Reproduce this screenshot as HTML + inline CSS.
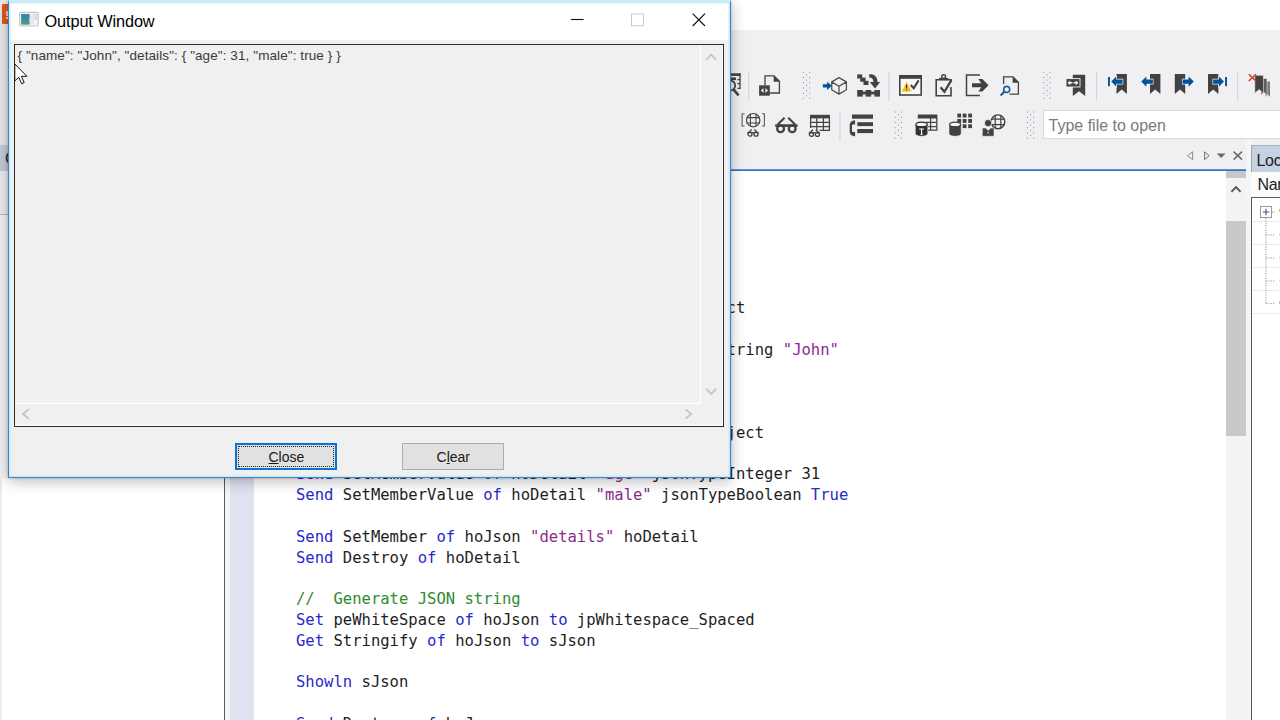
<!DOCTYPE html>
<html><head><meta charset="utf-8"><title>Output Window</title>
<style>
*{box-sizing:border-box;margin:0;padding:0}
html,body{width:1280px;height:720px;overflow:hidden;background:#fff;font-family:"Liberation Sans",sans-serif}
.abs{position:absolute}
#root{position:relative;width:1280px;height:720px;overflow:hidden;background:#fff}
#ide-title{left:0;top:0;width:1280px;height:30px;background:#fff}
#ide-toolbar{left:0;top:30px;width:1280px;height:141px;background:#f0f0f3}
#blue-line{left:0;top:168.8px;width:1245.8px;height:2.3px;background:linear-gradient(#7fb8ea,#3a7cc4 45%,#2f6fba)}
#left-strip{left:0;top:0;width:9px;height:720px}
#left-pane{left:0;top:172px;width:224px;height:548px;background:#fff}
#left-split{left:224px;top:172px;width:6px;height:548px;background:#f5f5f7;border-left:1px solid #5c5c5c}
#gutter{left:230px;top:172px;width:24px;height:548px;background:#e0e2f1}
#editor{left:254px;top:172px;width:972px;height:548px;background:#fff}
#code{left:296px;top:298px;white-space:pre;font-family:"DejaVu Sans Mono","Liberation Mono",monospace;font-size:15.56px;line-height:20.8px;color:#1e1e1e}
.k{color:#2828cc}.s{color:#8b2b8b}.c{color:#2e8b2e}
/* editor scrollbar */
#vs-split{left:1226px;top:171px;width:20px;height:7px;background:#c9c9cb}
#vs-track{left:1226px;top:178px;width:20px;height:542px;background:#f3f3f4}
#vs-thumb{left:1226px;top:221px;width:20px;height:215px;background:#c9c9cb}
/* right panel */
#rp-gap{left:1246px;top:140px;width:5px;height:580px;background:#f5f5f7}
#rp-tab{left:1251px;top:145px;width:29px;height:27px;background:#c6d1e1;border-top:1px solid #a4afc0;border-left:1px solid #9aa6b8;font-size:16px;color:#1e1e1e;line-height:29px;padding-left:4.5px;letter-spacing:-0.3px;overflow:hidden;white-space:nowrap}
#rp-head{left:1251px;top:172px;width:29px;height:25px;background:#fbfbfb;font-size:16px;color:#1e1e1e;line-height:26px;padding-left:6.5px;letter-spacing:-0.3px;overflow:hidden;white-space:nowrap}
#rp-tree{left:1251px;top:197px;width:40px;height:540px;background:#fff;border:1px solid #5a5a5a}
.rrow{left:1252px;width:28px;height:1px;background:#ececec}
/* file input */
#finput{left:1043px;top:110.4px;width:250px;height:28.4px;background:#fff;border:1px solid #dadade;font-size:16px;color:#7a7a7a;line-height:30.4px;padding-left:4.5px;white-space:nowrap}
/* window */
#win{left:8px;top:0;width:723.2px;height:477.7px;background:#f0f0f0;border:1.5px solid #3f83c6;border-top:2px solid #c9ecf7;box-shadow:0 3px 14px rgba(0,0,0,.27),0 0 3px rgba(0,0,0,.2)}
#titlebar{left:0;top:0;width:720.2px;height:37.7px;background:#fff}
#title{left:35.5px;top:9.6px;font-size:16.3px;color:#000;white-space:nowrap;letter-spacing:-0.1px}
#txt{left:4.5px;top:41.6px;width:710.4px;height:383.3px;border:1.5px solid #2b2b2b;background:#f0f0f0;box-shadow:inset -1px -1px 0 #fff}
#json{left:3px;top:3px;font-size:13.5px;letter-spacing:0.09px;color:#3a3a3a;white-space:pre}
.btn{height:27.5px;width:102px;background:#e1e1e1;border:1px solid #adadad;font-size:14px;text-align:center;line-height:26px;color:#1a1a1a}
</style></head><body><div id="root">
<div id="ide-title" class="abs"></div>
<div id="ide-toolbar" class="abs"></div>
<div id="left-pane" class="abs"></div>
<div id="left-split" class="abs"></div>
<div id="gutter" class="abs"></div>
<div id="editor" class="abs"></div>
<div id="blue-line" class="abs"></div>
<div id="vs-track" class="abs"></div>
<div id="vs-split" class="abs"></div>
<div id="vs-thumb" class="abs"></div>
<div id="rp-gap" class="abs"></div>
<div id="rp-tab" class="abs">Locals</div>
<div id="rp-head" class="abs">Name</div>
<div id="rp-tree" class="abs"></div>
<div class="rrow abs" style="top:221px"></div>
<div class="rrow abs" style="top:244px"></div>
<div class="rrow abs" style="top:267px"></div>
<div class="rrow abs" style="top:290px"></div>
<div class="rrow abs" style="top:313px"></div>
<div id="finput" class="abs">Type file to open</div>
<!-- left strip pieces -->
<div class="abs" style="left:0;top:0;width:9px;height:145px;background:#e9e9ec"></div>
<div class="abs" style="left:2px;top:4px;width:7px;height:20px;background:#e2571c;border-radius:1px"></div>
<div class="abs" style="left:6.2px;top:10.5px;width:2.2px;height:5.5px;background:#f7d5c6"></div><div class="abs" style="left:6.2px;top:17px;width:2.2px;height:1.6px;background:#f7d5c6"></div>
<div class="abs" style="left:0;top:145px;width:9px;height:26px;background:#c3ccd9;overflow:hidden;font-size:16.5px;line-height:26px;color:#1e1e1e;padding-left:5px">Co</div>
<div class="abs" style="left:0;top:171px;width:9px;height:43px;background:#ededf1"></div>
<div class="abs" style="left:0;top:214px;width:9px;height:1px;background:#b8b8bc"></div>
<div class="abs" style="left:0;top:215px;width:9px;height:263px;background:#f3f3f5"></div>
<div class="abs" style="left:0;top:478px;width:2px;height:242px;background:#ececee"></div>
<svg class="abs" style="left:0;top:0" width="1280" height="720" viewBox="0 0 1280 720" fill="none">
<defs>
 <g id="grip" fill="#9a9aa2">
  <rect x="0" y="0" width="1.1" height="1.1"/><rect x="6.3" y="0" width="1.1" height="1.1"/>
  <rect x="3.2" y="2.6" width="1.1" height="1.1"/>
  <rect x="0" y="5.2" width="1.1" height="1.1"/><rect x="6.3" y="5.2" width="1.1" height="1.1"/>
  <rect x="3.2" y="7.8" width="1.1" height="1.1"/>
  <rect x="0" y="10.4" width="1.1" height="1.1"/><rect x="6.3" y="10.4" width="1.1" height="1.1"/>
  <rect x="3.2" y="13" width="1.1" height="1.1"/>
  <rect x="0" y="15.6" width="1.1" height="1.1"/><rect x="6.3" y="15.6" width="1.1" height="1.1"/>
  <rect x="3.2" y="18.2" width="1.1" height="1.1"/>
  <rect x="0" y="20.8" width="1.1" height="1.1"/><rect x="6.3" y="20.8" width="1.1" height="1.1"/>
  <rect x="3.2" y="23.4" width="1.1" height="1.1"/>
  <rect x="0" y="26" width="1.1" height="1.1"/><rect x="6.3" y="26" width="1.1" height="1.1"/>
 </g>
 <path id="bm" d="M0 0H10.4V20.2L5.2 15.6L0 20.2Z" fill="#424242"/>
 <g id="sglass" stroke="#424242" stroke-width="1.3" fill="none">
  <circle cx="3" cy="5" r="2"/><circle cx="9" cy="5" r="2"/><path d="M0.3 3.4H11.7M1.5 3.4L4.6 0.3M10.5 3.4L7.4 0.3"/>
 </g>
</defs>
<!-- separators -->
<g stroke="#d4d4da" stroke-width="1.2">
 <path d="M748.7 72V101M888.8 72V101M1096.5 72V101M1237.6 72V101M839.9 112V141"/>
</g>
<!-- grips -->
<use href="#grip" x="802.8" y="71.8"/>
<use href="#grip" x="1043.3" y="71.8"/>
<use href="#grip" x="894.6" y="111.5"/>
<use href="#grip" x="1026.8" y="111.5"/>
<!-- A: partial table/magnifier icon (mostly hidden by window) -->
<g>
 <rect x="722" y="73.3" width="18.6" height="2.6" fill="#424242"/>
 <rect x="722" y="77.5" width="14" height="2.6" fill="#424242"/>
 <path d="M740 73.5V88.3H737.5M737.4 79.7H740M737.4 83.7H740" stroke="#424242" stroke-width="1.3"/>
 <circle cx="730" cy="85.5" r="5.2" stroke="#424242" stroke-width="1.7"/>
 <path d="M733.6 89.6L738.6 95.3" stroke="#424242" stroke-width="2.6"/>
</g>
<!-- C: doc with code square -->
<g>
 <path d="M765 85.3V75.9H774L779.4 81.3V93H770" stroke="#424242" stroke-width="1.3"/>
 <path d="M773.6 75.6L779.8 81.8H773.6Z" fill="#424242"/>
 <rect x="759.1" y="85.3" width="10.7" height="10.4" fill="#424242"/>
 <path d="M760.9 90.5L763.5 88.1V92.9ZM768 90.5L765.4 88.1V92.9Z" fill="#f4f4f4"/>
</g>
<!-- E: arrow + cube -->
<g>
 <path d="M822.8 84.3H827.2V81.4L831.6 85.8L827.2 90.3V87.4H822.8Z" fill="#00539c"/>
 <path d="M839 77.6L846.4 81.9V89.8L839 94.1L831.7 89.8V81.9ZM831.7 81.9L839 86.3L846.4 81.9M839 86.3V94.1" stroke="#4c4c4c" stroke-width="1.25" stroke-linejoin="round"/>
</g>
<!-- F: stairs / step icon -->
<g fill="#424242">
 <rect x="857.2" y="74.4" width="5" height="4.1"/><rect x="860.2" y="77.6" width="5.4" height="4.1"/><rect x="863.5" y="80.8" width="5" height="4.2"/>
 <rect x="857.2" y="90" width="5.6" height="6.6"/><rect x="865.6" y="90" width="5.6" height="6.6"/><rect x="874.4" y="90" width="5.6" height="6.6"/><rect x="860" y="91.6" width="17" height="2.8"/>
 <path d="M869.2 74.4C874 74 877.6 76.6 877.4 82H880.2L875 88.4L869.8 82H873.4C873.6 79.2 872 77.6 869.2 77.6Z"/>
</g>
<!-- H: window w/ warning + check -->
<g>
 <rect x="899.8" y="75.8" width="21.4" height="19.2" fill="#f7f7f7" stroke="#424242" stroke-width="1.6"/>
 <rect x="899" y="75" width="23" height="3.8" fill="#424242"/>
 <path d="M906.6 81.8L911.6 91.4H901.6Z" fill="#f7c31a"/>
 <path d="M906.6 84.6V88.4M906.6 89.4V90.6" stroke="#2a2a2a" stroke-width="1.1"/>
 <path d="M910.8 85L913.7 88.2L918.6 80.4" stroke="#424242" stroke-width="2.1"/>
</g>
<!-- I: clipboard check -->
<g stroke="#424242">
 <path d="M951 87V95.8H936.2V79.8H951V82" stroke-width="1.6"/>
 <circle cx="943.6" cy="76.6" r="1.9" stroke-width="1.4"/>
 <path d="M939 79H948.2" stroke-width="2.2"/>
 <path d="M940.6 87.2L944.4 91.8L951.4 80.2" stroke-width="2.3"/>
</g>
<!-- J: export -->
<g>
 <path d="M980 75.1H966.5V95.6H980" stroke="#424242" stroke-width="1.5"/>
 <path d="M972 83.2H981.2L978.4 79H982.4L988.5 85.2L982.4 91.4H978.4L981.2 87.3H972Z" fill="#424242"/>
</g>
<!-- K: doc search -->
<g>
 <path d="M1003.6 84V76.9H1013L1018.4 82.3V94.1H1009.6" stroke="#424242" stroke-width="1.3"/>
 <path d="M1012.6 76.6L1018.8 82.8H1012.6Z" fill="#424242"/>
 <circle cx="1006.7" cy="89.4" r="3" stroke="#1e5c9a" stroke-width="1.6" fill="#f4f4f6"/>
 <path d="M1004.4 91.8L1000.6 95.6" stroke="#1e5c9a" stroke-width="2.1"/>
</g>
<!-- M: bookmark toggle -->
<g>
 <path d="M1072.8 74.8H1085.2V96L1079 91.3L1072.8 96Z" fill="#424242"/>
 <rect x="1066" y="78.6" width="14" height="8.4" fill="#424242" stroke="#f2f2f4" stroke-width="0.9"/>
 <path d="M1067.6 82.8L1070.2 80.4V82H1072.4V83.6H1070.2V85.2ZM1078.4 82.8L1075.8 80.4V82H1073.6V83.6H1075.8V85.2Z" fill="#fff"/>
</g>
<!-- O: bm first -->
<g>
 <use href="#bm" x="1116.5" y="73.9"/>
 <rect x="1108" y="77" width="1.9" height="9.2" fill="#00539c"/>
 <path d="M1111.2 81.6L1116.2 76.6V79.4H1122.6V83.8H1116.2V86.6Z" fill="#00539c" stroke="#f0f0f3" stroke-width="1.3" paint-order="stroke"/>
</g>
<!-- P: bm prev -->
<g>
 <use href="#bm" x="1150" y="73.9"/>
 <path d="M1141.2 81.6L1146.4 76.4V79.4H1152.8V83.8H1146.4V86.8Z" fill="#00539c" stroke="#f0f0f3" stroke-width="1.3" paint-order="stroke"/>
</g>
<!-- Q: bm next -->
<g>
 <use href="#bm" x="1174.8" y="73.9"/>
 <path d="M1193.8 81.6L1188.6 76.4V79.4H1182.6V83.8H1188.6V86.8Z" fill="#00539c" stroke="#f0f0f3" stroke-width="1.3" paint-order="stroke"/>
</g>
<!-- R: bm last -->
<g>
 <use href="#bm" x="1208" y="73.9"/>
 <path d="M1224 81.6L1218.9 76.5V79.4H1213.2V83.8H1218.9V86.7Z" fill="#00539c" stroke="#f0f0f3" stroke-width="1.3" paint-order="stroke"/>
 <rect x="1225.1" y="77" width="1.9" height="9.2" fill="#00539c"/>
</g>
<!-- T: clear bookmarks -->
<g>
 <path d="M1265.6 81.6H1270V96.8L1267.8 94.6L1265.6 96.8Z" fill="#7c7c7c"/>
 <path d="M1261 78.5H1267V95L1264 92.4L1261 95Z" fill="#5c5c5c" stroke="#f0f0f3" stroke-width="0.5"/>
 <path d="M1254.8 75.3H1263.4V93.2L1259.1 89.6L1254.8 93.2Z" fill="#424242" stroke="#eeeef2" stroke-width="0.6"/>
 <path d="M1248.8 74.2L1256 81M1256 74.2L1248.8 81" stroke="#d13a22" stroke-width="1.5"/>
</g>
<!-- row 2 -->
<!-- a: globe in brackets + glasses -->
<g stroke="#424242">
 <path d="M744.6 113.7H742.1V126H744.6M761.9 113.7H764.4V126H761.9" stroke-width="1.1" stroke="#5a5a5a"/>
 <circle cx="753.2" cy="120.2" r="6.7" stroke-width="1.2"/>
 <path d="M750.4 113.8V126.6M756 113.8V126.6M746.6 117.6H759.8M746.6 122.9H759.8" stroke-width="1.05"/>
</g>
<use href="#sglass" x="747" y="129.2"/>
<!-- b: glasses -->
<g stroke="#424242" fill="none">
 <circle cx="780.6" cy="128.7" r="3.4" stroke-width="2.3"/><circle cx="792.2" cy="128.7" r="3.4" stroke-width="2.3"/>
 <path d="M775.2 125.6H797.6" stroke-width="2.6"/>
 <path d="M777.4 124.8L784.6 117.8M795.4 124.8L788.2 117.8" stroke-width="2"/>
</g>
<!-- c: table + glasses -->
<g>
 <rect x="810" y="114.8" width="20" height="3.6" fill="#424242"/>
 <path d="M810.6 118V128M816.8 118V130.4M823.4 118V130.4M829.4 118V130.4M810 122.3H830M810 126.5H830M819.6 130.4H830" stroke="#424242" stroke-width="1.25"/>
 <use href="#sglass" x="808.4" y="129.4"/>
</g>
<!-- e: list w/ handset -->
<g fill="#424242">
 <rect x="852" y="114.5" width="21" height="4.2"/><rect x="857.3" y="122.2" width="15.7" height="3.9"/><rect x="857.3" y="129" width="15.7" height="4.1"/>
 <path d="M855.1 120.2V124.5H853.2C852.3 124.5 852 124.9 852 125.8V130.8C852 131.7 852.3 132 853.2 132H855.1V136.4C851.4 136.2 849.7 134.4 849.7 131.6V125C849.7 122.2 851.4 120.4 855.1 120.2Z"/>
</g>
<!-- g: db table -->
<g>
 <rect x="917.8" y="114.5" width="19.6" height="4" fill="#424242"/>
 <path d="M930.6 118V130.8M936.8 118V130.8M926 122.4H937.4M928 126.6H937.4M928 130.2H937.4" stroke="#424242" stroke-width="1.25"/>
 <path d="M915.3 124.4V133.6A6.25 2.7 0 0 0 927.8 133.6V124.4Z" fill="#303030" stroke="#eeeef2" stroke-width="0.6"/>
 <ellipse cx="921.55" cy="124.4" rx="5.7" ry="2.3" fill="#f7f7f7" stroke="#303030" stroke-width="1.2"/>
 <path d="M919.2 129H923.9M921.55 129V134M920.4 134.2H922.7" stroke="#fff" stroke-width="1.1"/>
</g>
<!-- h: db grid -->
<g fill="#424242">
 <rect x="957.3" y="113.6" width="3.8" height="3.9"/><rect x="962.7" y="113.6" width="3.8" height="3.9"/><rect x="968.2" y="113.6" width="3.8" height="3.9"/>
 <rect x="957.3" y="119" width="3.8" height="3.9"/><rect x="962.7" y="119" width="3.8" height="3.9"/><rect x="968.2" y="119" width="3.8" height="3.9"/>
 <rect x="962.7" y="124.3" width="3.8" height="3.8"/><rect x="968.2" y="124.3" width="3.8" height="3.8"/>
 <path d="M949 124.4V133.6A6.1 2.7 0 0 0 961.2 133.6V124.4Z" stroke="#eeeef2" stroke-width="0.6"/>
 <ellipse cx="955.1" cy="124.4" rx="5.5" ry="2.3" fill="#f7f7f7" stroke="#424242" stroke-width="1.2"/>
</g>
<!-- i: person + globe -->
<g>
 <circle cx="997.9" cy="121.8" r="6.9" stroke="#424242" stroke-width="1.4"/>
 <path d="M995.2 115.4V128M1000.8 115.4V128M991.4 119.2H1004.4M991.6 124.6H1004.2" stroke="#424242" stroke-width="1.2"/>
 <circle cx="988.1" cy="123.1" r="3.7" fill="#424242" stroke="#eeeef2" stroke-width="0.9"/>
 <path d="M982.3 128H985.8L988.2 130.6L990.6 128H994V136.3H982.3Z" fill="#424242" stroke="#eeeef2" stroke-width="0.6"/>
 <rect x="987.4" y="132.2" width="1.6" height="1.2" fill="#ddd"/>
</g>
<!-- tab nav icons -->
<g>
 <path d="M1192.6 151.8V159.6L1187.6 155.7Z" stroke="#8a8a8a" stroke-width="1"/>
 <path d="M1204.6 151.8V159.6L1209.2 155.7Z" stroke="#6e6e6e" stroke-width="1"/>
 <path d="M1216.8 153.4H1225.6L1221.2 158Z" fill="#6a6a6a"/>
 <path d="M1233.6 151.6L1242 159.6M1242 151.6L1233.6 159.6" stroke="#6a6a6a" stroke-width="1.5"/>
 <path d="M1231.4 191.8L1236 187L1240.6 191.8" stroke="#555" stroke-width="1.9"/>
</g>
<!-- right panel tree bits -->
<g>
 <rect x="1260.5" y="206.5" width="11" height="11" fill="#fdfdfd" stroke="#9a9a9a" stroke-width="1"/>
 <path d="M1262.8 212H1269.2M1266 208.8V215.2" stroke="#4a4a8a" stroke-width="1.1"/>
 <path d="M1266 218V303.6M1272 212H1275M1266 235H1275M1266 258H1275M1266 281H1275M1266 303.6H1275" stroke="#8a8a8a" stroke-width="1" stroke-dasharray="1 1.4"/>
 <rect x="1279" y="209" width="1" height="3" fill="#f2b090"/><rect x="1279.2" y="233" width="0.8" height="3" fill="#f4d8a0"/><rect x="1279.2" y="256" width="0.8" height="3" fill="#f4d8a0"/><rect x="1279.2" y="279" width="0.8" height="3" fill="#f4d8a0"/><rect x="1279" y="301" width="1" height="3" fill="#f2b090"/>
</g>
</svg>
<div id="code" class="abs"><span class="k">Send</span> InitializeJsonType <span class="k">of</span> hoJson jsonTypeObject

<span class="k">Send</span> SetMemberValue <span class="k">of</span> hoJson <span class="s">"name"</span> jsonTypeString <span class="s">"John"</span>


<span class="k">Get</span> Create (RefClass(cJsonObject)) <span class="k">to</span> hoDetail
<span class="k">Send</span> InitializeJsonType <span class="k">of</span> hoDetail jsonTypeObject

<span class="k">Send</span> SetMemberValue <span class="k">of</span> hoDetail <span class="s">"age"</span> jsonTypeInteger 31
<span class="k">Send</span> SetMemberValue <span class="k">of</span> hoDetail <span class="s">"male"</span> jsonTypeBoolean <span class="k">True</span>

<span class="k">Send</span> SetMember <span class="k">of</span> hoJson <span class="s">"details"</span> hoDetail
<span class="k">Send</span> Destroy <span class="k">of</span> hoDetail

<span class="c">//  Generate JSON string</span>
<span class="k">Set</span> peWhiteSpace <span class="k">of</span> hoJson <span class="k">to</span> jpWhitespace_Spaced
<span class="k">Get</span> Stringify <span class="k">of</span> hoJson <span class="k">to</span> sJson

<span class="k">Showln</span> sJson

<span class="k">Send</span> Destroy <span class="k">of</span> hoJson</div>
<!-- window shadow on the right toolbar side is from box-shadow -->
<div id="win" class="abs">
 <div id="titlebar" class="abs"></div>
 <svg class="abs" style="left:-9.5px;top:-2px" width="740" height="480" viewBox="0 0 740 480" fill="none">
  <!-- title icon -->
  <rect x="19.6" y="12.4" width="18.6" height="13.6" rx="1" fill="#f4f5f7" stroke="#c3c6cc" stroke-width="1.1"/>
  <rect x="21.2" y="14" width="8.2" height="10.4" fill="#3f8d96"/>
  <rect x="21.2" y="14" width="8.2" height="4" fill="#3a86a8"/>
  <rect x="21.2" y="21" width="8.2" height="3.4" fill="#4a9a86"/>
  <rect x="30.4" y="14" width="3.4" height="10.4" fill="#e3e6ee"/>
  <rect x="34.4" y="14" width="2.6" height="6" fill="#d6dbe6"/>
  <!-- controls -->
  <path d="M571 19.5H583.6" stroke="#111" stroke-width="1.1"/>
  <rect x="631.5" y="13.9" width="12" height="11.8" stroke="#c8c8c8" stroke-width="1"/>
  <path d="M692.7 13.6L705 26M705 13.6L692.7 26" stroke="#111" stroke-width="1.15"/>
 </svg>
 <div id="title" class="abs">Output Window</div>
 <div id="txt" class="abs"><div id="json" class="abs">{ "name": "John", "details": { "age": 31, "male": true } }</div></div>
 <svg class="abs" style="left:-9.5px;top:-2px" width="740" height="480" viewBox="0 0 740 480" fill="none">
  <!-- textbox scroll separators -->
  <path d="M700.4 45.5V403.4M15 403.4H700.4" stroke="#fff" stroke-width="1.1"/>
  <!-- chevrons -->
  <g stroke="#c4c4c4" stroke-width="1.8">
   <path d="M706.2 60L711.2 54.6L716.2 60"/>
   <path d="M706.2 388.6L711.2 394L716.2 388.6"/>
   <path d="M28.6 409.4L23 414L28.6 418.6"/>
   <path d="M685.6 409.4L691.2 414L685.6 418.6"/>
  </g>
  <!-- mouse cursor -->
  <path d="M14.8 63.9V80.9L18.8 77.3L21.6 83.7L24.2 82.6L21.4 76.3H26.9Z" fill="#fff" stroke="#111" stroke-width="1" stroke-linejoin="miter"/>
 </svg>
 <div class="abs" style="left:0;top:0;right:0;bottom:0;box-shadow:inset 0 0 0 1.6px rgba(200,232,248,.85)"></div>
 <div class="btn abs" style="left:226.4px;top:440.8px;border:2px solid #0a74d0;line-height:24.6px"><div class="abs" style="left:1px;top:1px;right:1px;bottom:1px;border:1px dotted #222"></div><u>C</u>lose</div>
 <div class="btn abs" style="left:393.3px;top:440.8px">C<u>l</u>ear</div>
</div>
</div></body></html>
